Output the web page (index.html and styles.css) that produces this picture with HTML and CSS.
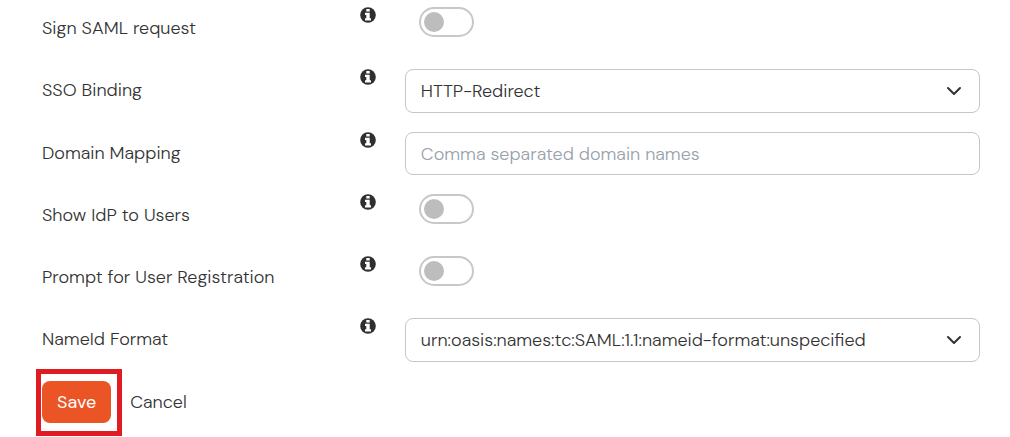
FILE: index.html
```html
<!DOCTYPE html>
<html lang="en">
<head>
    <meta charset="UTF-8">
    <meta name="viewport" content="width=device-width, initial-scale=1.0">
    <title>SAML Settings</title>
    <link rel="stylesheet" href="styles.css">
</head>
<body>
    <!-- Info icon shared by all rows -->
    <svg class="sprite" width="0" height="0" aria-hidden="true">
        <symbol id="info" viewBox="0 0 16 16">
            <circle cx="8" cy="8" r="7.8" fill="#2f2f2f"/>
            <path fill="#fff" d="M6.3 2h3.4v2.6H6.3zM5 5.8h4.7v5.4H11v2.3H5v-2.3h1.3V8.1H5z"/>
        </symbol>
    </svg>

    <form class="settings">
        <div class="row">
            <label for="signRequest">Sign SAML request</label>
            <svg class="info"><use href="#info"/></svg>
            <input type="checkbox" class="toggle" id="signRequest">
        </div>
        <div class="row">
            <label for="ssoBinding">SSO Binding</label>
            <svg class="info"><use href="#info"/></svg>
            <div class="selectBox">
                <select id="ssoBinding">
                    <option>HTTP-Redirect</option>
                </select>
                <svg class="arrow" viewBox="0 0 16 16"><path d="M2 5l6 6 6-6"/></svg>
            </div>
        </div>
        <div class="row">
            <label for="domainMapping">Domain Mapping</label>
            <svg class="info"><use href="#info"/></svg>
            <input type="text" class="textInput" id="domainMapping" placeholder="Comma separated domain names">
        </div>
        <div class="row">
            <label for="showIdp">Show IdP to Users</label>
            <svg class="info"><use href="#info"/></svg>
            <input type="checkbox" class="toggle" id="showIdp">
        </div>
        <div class="row">
            <label for="promptUser">Prompt for User Registration</label>
            <svg class="info"><use href="#info"/></svg>
            <input type="checkbox" class="toggle" id="promptUser">
        </div>
        <div class="row">
            <label for="nameIdFormat">NameId Format</label>
            <svg class="info"><use href="#info"/></svg>
            <div class="selectBox">
                <select id="nameIdFormat">
                    <option>urn:oasis:names:tc:SAML:1.1:nameid-format:unspecified</option>
                </select>
                <svg class="arrow" viewBox="0 0 16 16"><path d="M2 5l6 6 6-6"/></svg>
            </div>
        </div>
        <div class="actions">
            <div class="highlight">
                <button type="submit" class="save">Save</button>
            </div>
            <a href="#" class="cancel">Cancel</a>
        </div>
    </form>
</body>
</html>
```

FILE: styles.css
```css
* {
    box-sizing: border-box;
    margin: 0;
    padding: 0;
}

body {
    background-color: #fff;
    color: #333;
    font-family: 'DM Sans', 'Open Sans', sans-serif;
    font-size: 18px;
    font-weight: 300;
    line-height: 24px;
}

.sprite {
    display: block;
}

.settings {
    display: flex;
    flex-direction: column;
    gap: 19px;
    padding: 7px 30px 14px 42px;
}

.row {
    display: grid;
    grid-template-columns: 21fr 45px 38fr;
    align-items: start;
    min-height: 43px;
}

.row label {
    padding-top: 9px;
}

.info {
    width: 16px;
    height: 16px;
}

.selectBox {
    position: relative;
}

.selectBox select,
.textInput {
    display: block;
    width: 100%;
    height: 44px;
    padding: 0 15px;
    border: 1px solid #c6c6c6;
    border-radius: 8px;
    background: #fff;
    color: #333;
    font: inherit;
    appearance: none;
}

.textInput {
    height: 43px;
}

.textInput::placeholder {
    color: #98a1ac;
}

.arrow {
    position: absolute;
    top: 14px;
    right: 18px;
    width: 16px;
    height: 16px;
    fill: none;
    stroke: #333;
    stroke-width: 2;
    stroke-linecap: round;
    stroke-linejoin: round;
    pointer-events: none;
}

.toggle {
    width: 55px;
    height: 30px;
    margin-left: 14px;
    border: 2px solid #c8c8c8;
    border-radius: 15px;
    appearance: none;
    cursor: pointer;
}

.toggle::before {
    content: '';
    display: block;
    width: 20px;
    height: 20px;
    margin: 3px;
    border-radius: 50%;
    background: #bdbdbd;
}

.toggle:checked::before {
    margin-left: 28px;
}

.actions {
    display: flex;
    align-items: center;
    gap: 19px;
}

.highlight {
    position: relative;
}

/* red frame drawn around the save button */
.highlight::after {
    content: '';
    position: absolute;
    top: -12px;
    right: -11px;
    bottom: -13px;
    left: -6px;
    border: 5px solid #e01b22;
    pointer-events: none;
}

.save {
    display: block;
    height: 42px;
    padding: 0 15px;
    border: none;
    border-radius: 8px;
    background: #eb5424;
    color: #fff;
    font: inherit;
    font-weight: 400;
    cursor: pointer;
}

.cancel {
    color: #333;
    text-decoration: none;
}
```
